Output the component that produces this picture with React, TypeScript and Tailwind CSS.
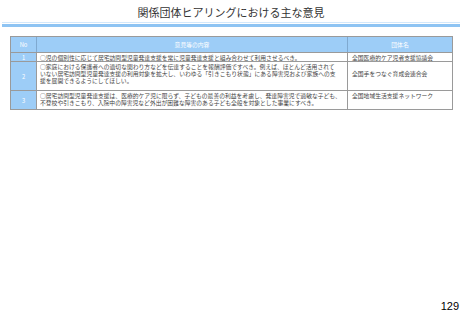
import React from "react";

const rows = [
  {
    no: "1",
    h: "h-[9px]",
    lines: ["○児の個別性に応じて居宅訪問型児童発達支援を常に児童発達支援と組み合わせて利用させるべき。"],
    org: "全国医療的ケア児者支援協議会",
    orgPad: "pt-[1px]",
  },
  {
    no: "2",
    h: "h-[29px]",
    lines: [
      "○家庭における保護者への適切な関わり方などを伝達することを報酬評価ですべき。例えば、ほとんど活用されて",
      "いない居宅訪問型児童発達支援の利用対象を拡大し、いわゆる「引きこもり状態」にある障害児および家族への支",
      "援を展開できるようにしてほしい。",
    ],
    org: "全国手をつなぐ育成会連合会",
    orgPad: "pt-[8px]",
  },
  {
    no: "3",
    h: "h-[18px]",
    lines: [
      "○居宅訪問型児童発達支援は、医療的ケア児に限らず、子どもの最善の利益を考慮し、発達障害児で過敏な子ども、",
      "不登校や引きこもり、入院中の障害児など外出が困難な障害のある子ども全般を対象とした事業にすべき。",
    ],
    org: "全国地域生活支援ネットワーク",
    orgPad: "pt-[1px]",
  },
];

export default function App() {
  return (
    <div className="w-[462px] h-[320px] bg-white flex flex-col font-['Noto_Sans_CJK_JP','Noto_Sans',sans-serif] text-[#444]">
      <div className="pt-[5px] text-center text-[11px] leading-[14px] text-[#333]">
        関係団体ヒアリングにおける主な意見
      </div>
      <div className="mt-[3px] mx-[2px] h-px bg-[#d3e8fb]" />
      <div className="mt-[1px] mx-[2px] h-[3px] bg-[#8ec4f3]" />
      <div className="mt-[9px] ml-[10px] w-[443px] border border-[#9a9a9a]">
        <div className="flex h-[16px] bg-[#9dcdf7] text-white text-[5.8px] leading-[7px] border-b border-[#9a9a9a]">
          <div className="w-[26px] flex items-center justify-center border-r border-[#7fa9d0]">No</div>
          <div className="w-[311px] flex items-center justify-center border-r border-[#7fa9d0]">意見等の内容</div>
          <div className="flex-1 flex items-center justify-center">団体名</div>
        </div>
        {rows.map((r, i) => (
          <div
            key={r.no}
            className={`flex ${r.h} text-[5.8px] leading-[7px] ${i < rows.length - 1 ? "border-b border-[#9a9a9a]" : ""}`}
          >
            <div className="w-[26px] bg-[#9dcdf7] text-white flex items-center justify-center border-r border-[#9a9a9a]">
              {r.no}
            </div>
            <div className="w-[311px] pl-[3px] pt-[1px] whitespace-nowrap border-r border-[#9a9a9a]">
              {r.lines.map((l, j) => (
                <div key={j} className="h-[7px]">{l}</div>
              ))}
            </div>
            <div className={`flex-1 pl-[4px] ${r.orgPad} whitespace-nowrap`}>{r.org}</div>
          </div>
        ))}
      </div>
      <div className="mt-auto mb-[8px] mr-[3px] self-end text-[11px] leading-[12px] text-black font-['Liberation_Sans',sans-serif]">
        129
      </div>
    </div>
  );
}
